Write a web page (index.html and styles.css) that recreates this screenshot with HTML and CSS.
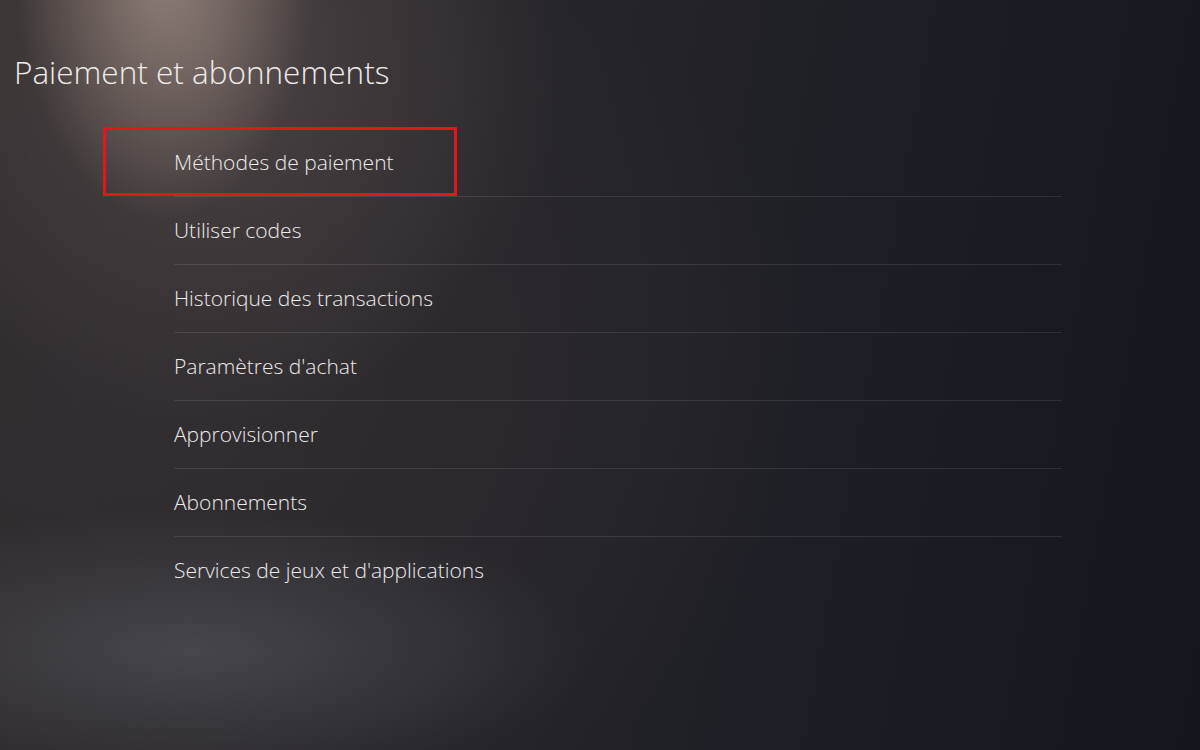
FILE: index.html
```html
<!DOCTYPE html>
<html>
<head>
    <title>Paiement et abonnements</title>
    <link rel="stylesheet" href="styles.css">
</head>
<body>
    <div class="screen">
        <h1 class="page-title">Paiement et abonnements</h1>

        <ul class="menu">
            <li class="menu-item focused">
                <span class="focus-box"></span>
                Méthodes de paiement
            </li>
            <li class="menu-item">Utiliser codes</li>
            <li class="menu-item">Historique des transactions</li>
            <li class="menu-item">Paramètres d'achat</li>
            <li class="menu-item">Approvisionner</li>
            <li class="menu-item">Abonnements</li>
            <li class="menu-item last">Services de jeux et d'applications</li>
        </ul>
    </div>
</body>
</html>
```

FILE: styles.css
```css
body {
    margin: 0;
    padding: 0;
    font-family: "Open Sans", "Noto Sans", sans-serif;
    color: #ecebea;
}

.screen {
    width: 1200px;
    height: 750px;
    overflow: hidden;
    box-sizing: border-box;
    padding-top: 52px;
    background:
        radial-gradient(ellipse 150px 260px at 165px -40px, rgba(165, 145, 135, 0.8), rgba(165, 145, 135, 0) 100%),
        radial-gradient(ellipse 360px 380px at 210px 40px, rgba(110, 95, 92, 0.5), rgba(110, 95, 92, 0) 100%),
        radial-gradient(ellipse 400px 140px at 190px 650px, rgba(78, 79, 86, 0.75), rgba(78, 79, 86, 0) 100%),
        radial-gradient(ellipse 650px 480px at 180px 380px, rgba(55, 50, 53, 0.6), rgba(55, 50, 53, 0) 100%),
        linear-gradient(100deg, #2e2a2c 0%, #25242a 45%, #1b1c24 75%, #14161e 100%);
}

.page-title {
    margin: 0 0 0 14px;
    font-size: 31.5px;
    font-weight: 300;
    line-height: 40px;
    color: #efecea;
}

.menu {
    list-style-type: none;
    margin: 37px 0 0 174px;
    padding: 0;
    width: 888px;
}

.menu-item {
    position: relative;
    box-sizing: border-box;
    height: 68px;
    line-height: 67px;
    font-size: 21px;
    font-weight: 300;
    border-bottom: 1px solid rgba(255, 255, 255, 0.1);
}

.menu-item.last {
    border-bottom: none;
}

.focus-box {
    position: absolute;
    left: -71px;
    top: -2px;
    width: 348px;
    height: 63px;
    border: 3px solid #e3161d;
}
```
